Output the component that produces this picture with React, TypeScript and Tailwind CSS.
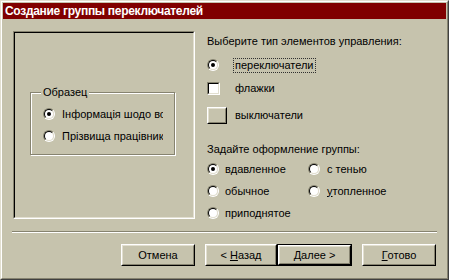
import React from "react";

/* --------------------------------------------------------------------------
   Win98-style bits
   -------------------------------------------------------------------------- */
const FACE = "bg-[#c6c3ad]";

function Radio({ checked = false }: { checked?: boolean }) {
  return (
    <div className="w-[12px] h-[12px] shrink-0 rounded-full border border-t-[#868370] border-l-[#868370] border-b-white border-r-white flex">
      <div className="flex-1 rounded-full border border-t-black border-l-black border-b-[#e2dfd0] border-r-[#e2dfd0] bg-white flex items-center justify-center">
        {checked && <div className="w-[4px] h-[4px] rounded-full bg-black" />}
      </div>
    </div>
  );
}

function Checkbox() {
  return (
    <div className="w-[13px] h-[13px] shrink-0 border border-t-[#868370] border-l-[#868370] border-b-white border-r-white flex">
      <div className="flex-1 border border-t-black border-l-black border-b-[#e2dfd0] border-r-[#e2dfd0] bg-white" />
    </div>
  );
}

function Raised({ className = "", children }: { className?: string; children?: React.ReactNode }) {
  return (
    <div className={`border border-t-white border-l-white border-b-black border-r-black flex ${className}`}>
      <div className="flex-1 border border-t-[#e2dfd0] border-l-[#e2dfd0] border-b-[#868370] border-r-[#868370] flex items-center justify-center">
        {children}
      </div>
    </div>
  );
}

function Button({ width, isDefault = false, children }: { width: string; isDefault?: boolean; children: React.ReactNode }) {
  if (isDefault) {
    return (
      <div className={`${width} h-[22px] border border-black flex`}>
        <Raised className="flex-1">{children}</Raised>
      </div>
    );
  }
  return <Raised className={`${width} h-[22px]`}>{children}</Raised>;
}

/* --------------------------------------------------------------------------
   App
   -------------------------------------------------------------------------- */
export default function App() {
  return (
    <div
      className={`w-[449px] h-[280px] ${FACE} border border-t-[#e2dfd0] border-l-[#e2dfd0] border-b-[#404040] border-r-[#404040] text-[11px] leading-[13px] text-black`}
      style={{ fontFamily: '"Liberation Sans", Arial, sans-serif' }}
    >
      <div className="h-full border border-t-white border-l-white border-b-[#868370] border-r-[#868370] p-[1px] flex flex-col">
        {/* ---- Title bar ---- */}
        <div className="h-[16px] bg-[#800000] text-white font-bold text-[12px] leading-[16px] tracking-[-0.3px] pl-[2px] whitespace-nowrap">
          Создание группы переключателей
        </div>

        {/* ---- Body ---- */}
        <div className="flex-1 flex flex-col">
          <div className="h-[212px] flex">
            {/* Preview */}
            <div className="ml-[10px] mt-[12px] w-[182px] h-[188px] border border-t-[#868370] border-l-[#868370] border-b-white border-r-white flex">
              <div className="flex-1 border border-t-black border-l-black border-b-[#e2dfd0] border-r-[#e2dfd0] pl-[15px] pt-[59px]">
                <div className="relative w-[145px] h-[63px] border border-[#868370] shadow-[inset_1px_1px_0_#fff,1px_1px_0_#fff] pl-[12px] pt-[11px]">
                  <span className={`absolute left-[10px] top-[-7px] px-[2px] ${FACE}`}>Образец</span>
                  <div className="h-[20px] flex items-center">
                    <Radio checked />
                    <span className="ml-[7px] w-[101px] overflow-hidden whitespace-nowrap">Інформація шодо вс</span>
                  </div>
                  <div className="mt-[2px] h-[20px] flex items-center">
                    <Radio />
                    <span className="ml-[7px] w-[101px] overflow-hidden whitespace-nowrap">Прізвища працівник</span>
                  </div>
                </div>
              </div>
            </div>

            {/* Options */}
            <div className="ml-[12px] flex flex-col">
              <div className="mt-[16px]">Выберите тип элементов управления:</div>

              <div className="mt-[7px] h-[20px] flex items-center">
                <Radio checked />
                <span className="ml-[14px] h-[15px] px-[1px] border border-dotted border-[#303030] flex items-center">
                  переключатели
                </span>
              </div>
              <div className="mt-[3px] h-[20px] flex items-center">
                <Checkbox />
                <span className="ml-[15px]">флажки</span>
              </div>
              <div className="mt-[7px] h-[20px] flex items-center">
                <Raised className="w-[20px] h-[17px]" />
                <span className="ml-[8px]">выключатели</span>
              </div>

              <div className="mt-[18px]">Задайте оформление группы:</div>

              <div className="mt-[3px] h-[20px] flex items-center">
                <div className="w-[101px] flex items-center">
                  <Radio checked />
                  <span className="ml-[6px]">вдавленное</span>
                </div>
                <Radio />
                <span className="ml-[7px]">с тенью</span>
              </div>
              <div className="mt-[2px] h-[20px] flex items-center">
                <div className="w-[101px] flex items-center">
                  <Radio />
                  <span className="ml-[6px]">обычное</span>
                </div>
                <Radio />
                <span className="ml-[7px]">
                  <span className="underline">у</span>топленное
                </span>
              </div>
              <div className="mt-[2px] h-[20px] flex items-center">
                <Radio />
                <span className="ml-[6px]">приподнятое</span>
              </div>
            </div>
          </div>

          {/* ---- Separator ---- */}
          <div className="ml-[9px] w-[425px] h-[2px] border-t border-t-[#868370] border-b border-b-white" />

          {/* ---- Buttons ---- */}
          <div className="mt-[11px] ml-[118px] flex">
            <Button width="w-[74px]">Отмена</Button>
            <div className="ml-[10px] flex">
              <Button width="w-[72px]">
                &lt; <span className="underline ml-[3px]">Н</span>азад
              </Button>
              <Button width="w-[75px]" isDefault>
                <span className="underline">Д</span>алее &gt;
              </Button>
            </div>
            <div className="ml-[10px]">
              <Button width="w-[74px]">
                <span className="underline">Г</span>отово
              </Button>
            </div>
          </div>
        </div>
      </div>
    </div>
  );
}
